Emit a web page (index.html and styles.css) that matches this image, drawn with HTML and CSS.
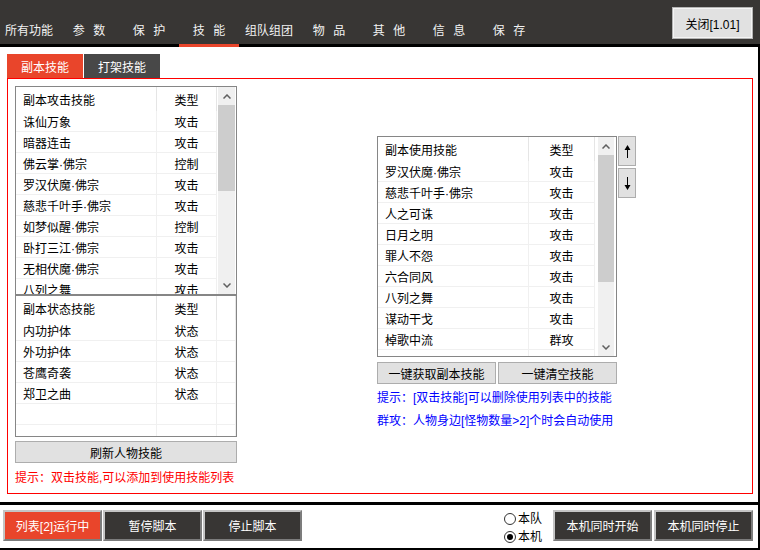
FILE: index.html
```html
<!DOCTYPE html>
<html lang="zh-CN">

<head>
    <meta charset="UTF-8">
    <meta name="viewport" content="width=device-width, initial-scale=1.0">
    <title>副本技能</title>
    <link rel="stylesheet" href="styles.css">
</head>

<body>
    <div class="window">
        <!-- top menu -->
        <div class="topbar">
            <div class="nav">
                <a>所有功能</a>
                <a>参 数</a>
                <a>保 护</a>
                <a class="active">技 能</a>
                <a>组队组团</a>
                <a>物 品</a>
                <a>其 他</a>
                <a>信 息</a>
                <a>保 存</a>
            </div>
            <button class="close-btn">关闭[1.01]</button>
        </div>

        <div class="main">
            <div class="tabs">
                <span class="tab active">副本技能</span>
                <span class="tab">打架技能</span>
            </div>

            <div class="panel">
                <div class="left-col">
                    <div class="list list-attack">
                        <div class="table">
                            <div class="row head"><span class="name">副本攻击技能</span><span class="type">类型</span></div>
                            <div class="row"><span class="name">诛仙万象</span><span class="type">攻击</span></div>
                            <div class="row"><span class="name">暗器连击</span><span class="type">攻击</span></div>
                            <div class="row"><span class="name">佛云掌·佛宗</span><span class="type">控制</span></div>
                            <div class="row"><span class="name">罗汉伏魔·佛宗</span><span class="type">攻击</span></div>
                            <div class="row"><span class="name">慈悲千叶手·佛宗</span><span class="type">攻击</span></div>
                            <div class="row"><span class="name">如梦似醒·佛宗</span><span class="type">控制</span></div>
                            <div class="row"><span class="name">卧打三江·佛宗</span><span class="type">攻击</span></div>
                            <div class="row"><span class="name">无相伏魔·佛宗</span><span class="type">攻击</span></div>
                            <div class="row"><span class="name">八列之舞</span><span class="type">攻击</span></div>
                        </div>
                        <div class="vscroll">
                            <div class="arrow"><svg width="8" height="5" viewBox="0 0 8 5"><polyline points="0.5,4.5 4,1 7.5,4.5" /></svg></div>
                            <div class="thumb thumb-attack"></div>
                            <div class="track"></div>
                            <div class="arrow"><svg width="8" height="5" viewBox="0 0 8 5"><polyline points="0.5,0.5 4,4 7.5,0.5" /></svg></div>
                        </div>
                    </div>

                    <div class="list list-state">
                        <div class="table">
                            <div class="row head"><span class="name">副本状态技能</span><span class="type">类型</span><span class="extra"></span></div>
                            <div class="row"><span class="name">内功护体</span><span class="type">状态</span><span class="extra"></span></div>
                            <div class="row"><span class="name">外功护体</span><span class="type">状态</span><span class="extra"></span></div>
                            <div class="row"><span class="name">苍鹰奇袭</span><span class="type">状态</span><span class="extra"></span></div>
                            <div class="row"><span class="name">郑卫之曲</span><span class="type">状态</span><span class="extra"></span></div>
                            <div class="row"><span class="name"></span><span class="type"></span><span class="extra"></span></div>
                            <div class="row"><span class="name"></span><span class="type"></span><span class="extra"></span></div>
                        </div>
                    </div>

                    <button class="btn-light btn-refresh">刷新人物技能</button>
                    <p class="hint-red">提示：双击技能,可以添加到使用技能列表</p>
                </div>

                <div class="right-col">
                    <div class="use-wrap">
                        <div class="list list-use">
                            <div class="table">
                                <div class="row head"><span class="name">副本使用技能</span><span class="type">类型</span></div>
                                <div class="row"><span class="name">罗汉伏魔·佛宗</span><span class="type">攻击</span></div>
                                <div class="row"><span class="name">慈悲千叶手·佛宗</span><span class="type">攻击</span></div>
                                <div class="row"><span class="name">人之可诛</span><span class="type">攻击</span></div>
                                <div class="row"><span class="name">日月之明</span><span class="type">攻击</span></div>
                                <div class="row"><span class="name">罪人不怨</span><span class="type">攻击</span></div>
                                <div class="row"><span class="name">六合同风</span><span class="type">攻击</span></div>
                                <div class="row"><span class="name">八列之舞</span><span class="type">攻击</span></div>
                                <div class="row"><span class="name">谋动干戈</span><span class="type">攻击</span></div>
                                <div class="row"><span class="name">棹歌中流</span><span class="type">群攻</span></div>
                                <div class="row"><span class="name"></span><span class="type"></span></div>
                            </div>
                            <div class="vscroll">
                                <div class="arrow"><svg width="8" height="5" viewBox="0 0 8 5"><polyline points="0.5,4.5 4,1 7.5,4.5" /></svg></div>
                                <div class="thumb thumb-use"></div>
                                <div class="track"></div>
                                <div class="arrow"><svg width="8" height="5" viewBox="0 0 8 5"><polyline points="0.5,0.5 4,4 7.5,0.5" /></svg></div>
                            </div>
                        </div>
                        <div class="move-btns">
                            <button class="btn-light btn-move"><svg width="7" height="13" viewBox="0 0 7 13"><path d="M3.5 0 L6.5 5 L4 5 L4 13 L3 13 L3 5 L0.5 5 Z" /></svg></button>
                            <button class="btn-light btn-move"><svg width="7" height="13" viewBox="0 0 7 13"><path d="M3.5 13 L6.5 8 L4 8 L4 0 L3 0 L3 8 L0.5 8 Z" /></svg></button>
                        </div>
                    </div>
                    <div class="use-actions">
                        <button class="btn-light">一键获取副本技能</button>
                        <button class="btn-light">一键清空技能</button>
                    </div>
                    <p class="hint-blue">提示：[双击技能]可以删除使用列表中的技能</p>
                    <p class="hint-blue">群攻：人物身边[怪物数量&gt;2]个时会自动使用</p>
                </div>
            </div>
        </div>

        <!-- bottom controls -->
        <div class="bottombar">
            <div class="run-btns">
                <button class="btn-dark running">列表[2]运行中</button>
                <button class="btn-dark">暂停脚本</button>
                <button class="btn-dark">停止脚本</button>
            </div>
            <div class="sync">
                <div class="radios">
                    <label class="radio"><span class="dot"></span>本队</label>
                    <label class="radio checked"><span class="dot"></span>本机</label>
                </div>
                <button class="btn-dark">本机同时开始</button>
                <button class="btn-dark">本机同时停止</button>
            </div>
        </div>
    </div>
</body>

</html>
```

FILE: styles.css
```css
* {
    box-sizing: border-box;
}

body {
    margin: 0;
    font-family: "Liberation Sans", "Noto Sans CJK SC", sans-serif;
    font-size: 12px;
    color: #000;
    background-color: #fff;
    overflow: hidden;
}

button {
    font-family: inherit;
    font-size: 12px;
    padding: 0;
    cursor: pointer;
}

.window {
    width: 760px;
    height: 550px;
    display: flex;
    flex-direction: column;
}

/* top menu */
.topbar {
    height: 47px;
    flex: none;
    background-color: #383634;
    border-bottom: 3px solid #000;
    display: flex;
    align-items: flex-start;
}

.nav {
    display: flex;
    margin-left: -1px;
}

.nav a {
    width: 60px;
    height: 44px;
    display: flex;
    align-items: flex-end;
    justify-content: center;
    padding-bottom: 5px;
    line-height: 16px;
    color: #f2f2f2;
    word-spacing: 5px;
}

.nav a.active {
    box-shadow: 0 3px 0 #e9452b;
}

.close-btn {
    margin: 7px 7px 0 auto;
    width: 81px;
    height: 32px;
    background-color: #e1e1e1;
    border: 1px solid #b4b4b4;
    box-shadow: inset 0 0 0 1px #f4f4f4;
    color: #000;
}

/* main area */
.main {
    flex: 1;
    border-right: 2px solid #000;
    padding: 7px 5px 8px 7px;
    display: flex;
    flex-direction: column;
}

.tabs {
    display: flex;
    gap: 1px;
    height: 24px;
}

.tab {
    width: 76px;
    display: flex;
    align-items: center;
    justify-content: center;
    color: #fff;
    background-color: #484848;
}

.tab.active {
    background-color: #e9452b;
}

.panel {
    flex: 1;
    border: 1px solid #ff0000;
    padding: 7px;
    display: flex;
    align-items: flex-start;
}

.left-col {
    width: 222px;
    display: flex;
    flex-direction: column;
}

/* list views */
.list {
    border: 1px solid #868686;
    display: flex;
    overflow: hidden;
    background-color: #fff;
}

.list-attack {
    height: 209px;
}

.list-state {
    height: 142px;
}

.table {
    flex: 1;
    overflow: hidden;
}

.row {
    display: flex;
    height: 21px;
    border-bottom: 1px solid #f0f0f0;
}

.row span {
    display: flex;
    align-items: center;
    border-right: 1px solid #f0f0f0;
    white-space: nowrap;
}

.row.head {
    height: 24px;
    border-bottom: none;
}

.row.head span {
    border-right-color: #e5e5e5;
    padding-top: 1px;
}

.name {
    width: 141px;
    padding-left: 7px;
}

.type {
    width: 60px;
    justify-content: center;
}

.extra {
    flex: 1;
}

.list-use .name {
    width: 151px;
}

.list-use .type {
    width: 66px;
}

.vscroll {
    width: 19px;
    padding: 0 1px;
    display: flex;
    flex-direction: column;
}

.vscroll .arrow,
.vscroll .track {
    background-color: #f0f0f0;
}

.vscroll .arrow {
    height: 18px;
    display: flex;
    align-items: center;
    justify-content: center;
}

.vscroll polyline {
    fill: none;
    stroke: #606060;
    stroke-width: 1.5;
}

.vscroll .thumb {
    background-color: #cdcdcd;
}

.vscroll .track {
    flex: 1;
}

.thumb-attack {
    height: 86px;
}

.thumb-use {
    height: 127px;
}

.btn-light {
    background-color: #e1e1e1;
    border: 1px solid #adadad;
    color: #000;
}

.btn-refresh {
    margin-top: 4px;
    height: 22px;
}

.hint-red {
    margin: 7px 0 0;
    line-height: 16px;
    color: #ff0000;
}

/* right side */
.right-col {
    margin: 50px 0 0 140px;
    display: flex;
    flex-direction: column;
}

.use-wrap {
    display: flex;
    gap: 1px;
}

.list-use {
    width: 240px;
    height: 221px;
}

.list-use .vscroll {
    width: 21px;
    padding: 0 2px 0 3px;
}

.move-btns {
    display: flex;
    flex-direction: column;
    gap: 2px;
}

.btn-move {
    width: 18px;
    height: 30px;
    display: flex;
    align-items: center;
    justify-content: center;
}

.btn-move path {
    fill: #000;
}

.use-actions {
    display: flex;
    gap: 2px;
    margin-top: 5px;
    width: 240px;
}

.use-actions .btn-light {
    flex: 1;
    height: 22px;
}

.hint-blue {
    margin: 6px 0 0;
    line-height: 17px;
    color: #0000ff;
}

/* bottom controls */
.bottombar {
    height: 48px;
    flex: none;
    border-top: 3px solid #000;
    border-bottom: 2px solid #000;
    border-right: 2px solid #000;
    padding: 5px 5px 0 3px;
    display: flex;
    justify-content: space-between;
    align-items: flex-start;
}

.run-btns {
    display: flex;
    gap: 1px;
}

.sync {
    display: flex;
    gap: 2px;
}

.btn-dark {
    width: 99px;
    height: 31px;
    background-color: #383634;
    color: #fff;
    border: 2px solid;
    border-color: #c4c4c4 #7c7c7c #7c7c7c #c4c4c4;
}

.btn-dark.running {
    background-color: #e9452b;
}

.radios {
    display: flex;
    flex-direction: column;
    margin-right: 9px;
}

.radio {
    display: flex;
    align-items: center;
    gap: 2px;
    height: 18px;
    line-height: 18px;
}

.radio .dot {
    width: 12px;
    height: 12px;
    border: 1px solid #333;
    border-radius: 50%;
    display: flex;
    align-items: center;
    justify-content: center;
}

.radio.checked .dot::after {
    content: "";
    width: 6px;
    height: 6px;
    border-radius: 50%;
    background-color: #000;
}
```
